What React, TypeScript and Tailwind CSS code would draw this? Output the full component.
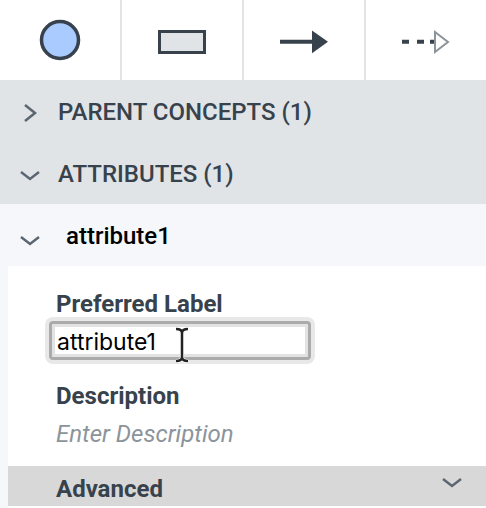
const Chevron = ({ open, className }: { open: boolean; className: string }) => (
  <svg viewBox="0 0 20 20" className={className} fill="none" stroke="#5b6670" strokeWidth="2.5">
    <path d={open ? "M1 9l9 7 9-7" : "M5 2l10 8-10 8"} />
  </svg>
);

const TOOLS = [
  <svg key="circle" width="42" height="42" viewBox="0 0 42 42">
    <circle cx="21" cy="21" r="18.5" fill="#a9cbff" stroke="#37424c" strokeWidth="3.5" />
  </svg>,
  <svg key="rect" width="50" height="26" viewBox="0 0 50 26" className="mt-[4px] ml-[2px]">
    <rect x="1.5" y="2.5" width="45" height="21" fill="#e0e4e7" stroke="#37424c" strokeWidth="3" />
  </svg>,
  <svg key="arrow" width="50" height="26" viewBox="0 0 50 26" className="mt-[4px] ml-[2px]">
    <path d="M0 12.7h34" stroke="#37424c" strokeWidth="4" />
    <path d="M32 1.5l16 11.3-16 11.5z" fill="#37424c" />
  </svg>,
  <svg key="dashed" width="50" height="26" viewBox="0 0 50 26" className="mt-[4px] ml-[2px]">
    <path d="M0 12.7h7M15 12.7h7M28 12.7h5" stroke="#37424c" strokeWidth="4" />
    <path d="M33 3l13 10-13 10z" fill="#fff" stroke="#8c949b" strokeWidth="2" />
  </svg>,
];

export default function App() {
  return (
    <div className="w-[486px] h-[508px] overflow-hidden bg-white font-['Roboto',sans-serif] text-[#37424c]">
      <div className="flex h-[80px]">
        {TOOLS.map((icon, i) => (
          <div key={i} className="w-[122px] last:flex-1 flex items-center justify-center border-r-2 last:border-r-0 border-[#e0e4e7]">
            {icon}
          </div>
        ))}
      </div>

      <div className="bg-[#e0e4e7] h-[124px] flex flex-col font-medium text-[24px]">
        <div className="h-[62px] flex items-center">
          <Chevron open={false} className="w-[20px] h-[20px] ml-[20px] mr-[18px] mt-[4px]" />
          <span className="mt-[2px]">PARENT CONCEPTS (1)</span>
        </div>
        <div className="h-[62px] flex items-center">
          <Chevron open className="w-[20px] h-[20px] ml-[20px] mr-[18px]" />
          <span className="mt-[2px]">ATTRIBUTES (1)</span>
        </div>
      </div>

      <div className="bg-[#f5f7fa] h-[62px] flex items-center font-medium text-[24px] text-black">
        <Chevron open className="w-[20px] h-[20px] ml-[20px] mr-[26px] mt-[6px]" />
        <span className="mt-[2px]">attribute1</span>
      </div>

      <div className="bg-[#f5f7fa] pl-2">
        <div className="bg-white h-[242px] flex flex-col">
          <div className="pl-[48px] pt-[24px] flex-1">
            <div className="font-bold text-[24px] leading-[28px]">Preferred Label</div>
            <div className="relative mt-[3px] ml-[-7px] w-[262px] h-[39px] rounded-[4px] bg-white border-[3px] border-[#ababab] flex items-center pl-[5px] pt-[4px] shadow-[0_0_0_4px_#e8e8e8,inset_0_0_0_3px_#e2e2e2] font-['Inter',sans-serif] text-[23px] text-black">
              attribute1
              <svg className="absolute left-[122px] top-[3px]" width="16" height="36" viewBox="0 0 16 36" fill="none" strokeWidth="2.5">
                <path d="M2 2c4 0 6 1 6 4v24c0 3-2 4-6 4M14 2c-4 0-6 1-6 4v24c0 3 2 4 6 4" stroke="#fff" strokeWidth="4" />
                <path d="M2 2c4 0 6 1 6 4v24c0 3-2 4-6 4M14 2c-4 0-6 1-6 4v24c0 3 2 4 6 4" stroke="#222" />
              </svg>
            </div>
            <div className="font-bold text-[24px] leading-[28px] mt-[22px]">Description</div>
            <div className="italic text-[24px] leading-[28px] mt-[10px] text-[#8c949b]">Enter Description</div>
          </div>
          <div className="relative bg-[#d8d8d8] h-[40px] mb-[2px] pl-[48px] pt-[5px] flex items-center font-bold text-[24px]">
            Advanced
            <Chevron open className="absolute left-[434px] top-[4px] w-[20px] h-[20px]" />
          </div>
        </div>
      </div>
    </div>
  );
}
